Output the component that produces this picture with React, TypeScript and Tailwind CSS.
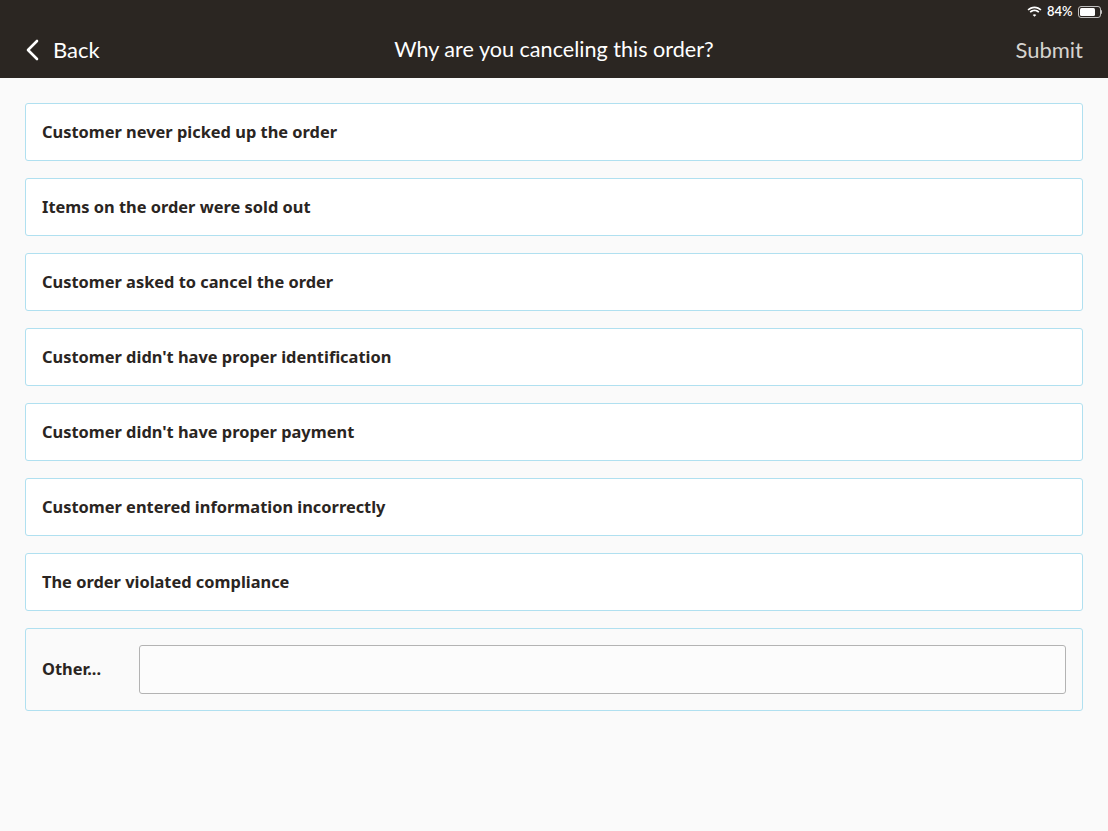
const reasons = [
  "Customer never picked up the order",
  "Items on the order were sold out",
  "Customer asked to cancel the order",
  "Customer didn't have proper identification",
  "Customer didn't have proper payment",
  "Customer entered information incorrectly",
  "The order violated compliance",
];

const font = { fontFamily: "Lato, 'Noto Sans', sans-serif" };
const itemFont = { fontFamily: "'Noto Sans', Lato, sans-serif" };

const App = () => {
  return (
    <div className="min-h-[831px] w-full bg-[#fafafa]" style={font}>
      <div className="h-[78px] bg-[#2b2622] text-white relative">
        {/* status bar */}
        <div className="absolute right-[6px] top-[2px] flex items-center gap-[5px] text-[13px] font-semibold">
          <svg width="15" height="11" viewBox="0 0 15 11" fill="white">
            <path d="M7.5 2.2c2.3 0 4.4.9 5.9 2.4l1.1-1.1C12.7 1.6 10.2.6 7.5.6S2.3 1.6.5 3.5l1.1 1.1C3.1 3.1 5.2 2.2 7.5 2.2z" />
            <path d="M7.5 5.2c1.5 0 2.8.6 3.8 1.5l1.1-1.1C11.1 4.3 9.4 3.6 7.5 3.6S3.9 4.3 2.6 5.6l1.1 1.1c1-.9 2.3-1.5 3.8-1.5z" />
            <path d="M7.5 8.2c.7 0 1.3.3 1.8.7L7.5 10.7 5.7 8.9c.5-.4 1.1-.7 1.8-.7z" />
          </svg>
          <span>84%</span>
          <div className="flex items-center">
            <div className="w-[23px] h-[12px] rounded-[3px] border border-white/70 p-[1px]">
              <div className="h-full w-[84%] bg-white rounded-[1.5px]" />
            </div>
            <div className="w-[1.5px] h-[4px] bg-white/70 rounded-r" />
          </div>
        </div>
        <div className="flex items-center h-full pt-[21px] px-[25px]">
          <div className="flex items-center w-[200px] gap-[13px]">
            <svg width="16" height="24" viewBox="0 0 16 24" fill="none" stroke="white" strokeWidth="2.6" strokeLinecap="round" strokeLinejoin="round" className="-ml-[1px]">
              <polyline points="13,3 4,12 13,21" />
            </svg>
            <span className="text-[22px]">Back</span>
          </div>
          <div className="flex-1 text-center text-[21.6px]">Why are you canceling this order?</div>
          <div className="w-[200px] text-right text-[22px] text-[#d6d3cf]">Submit</div>
        </div>
      </div>

      <div className="px-[25px] pt-[25px] flex flex-col gap-[17px]" style={itemFont}>
        {reasons.map((r) => (
          <button
            key={r}
            className="h-[58px] w-full bg-white border border-[#b0e0f0] rounded-[3px] text-left px-[16px] text-[16.4px] font-bold text-[#2a2522]"
          >
            {r}
          </button>
        ))}
        <div className="h-[83px] border border-[#b0e0f0] rounded-[3px] bg-[#fafafa] flex items-center px-[16px] gap-[33px]">
          <span className="text-[16.4px] font-bold text-[#2a2522] w-[64px]">Other...</span>
          <input
            type="text"
            className="flex-1 h-[49px] bg-[#fcfcfc] border border-[#b3b3b3] rounded-[3px] outline-none px-3"
          />
        </div>
      </div>
    </div>
  );
};

export default App;
